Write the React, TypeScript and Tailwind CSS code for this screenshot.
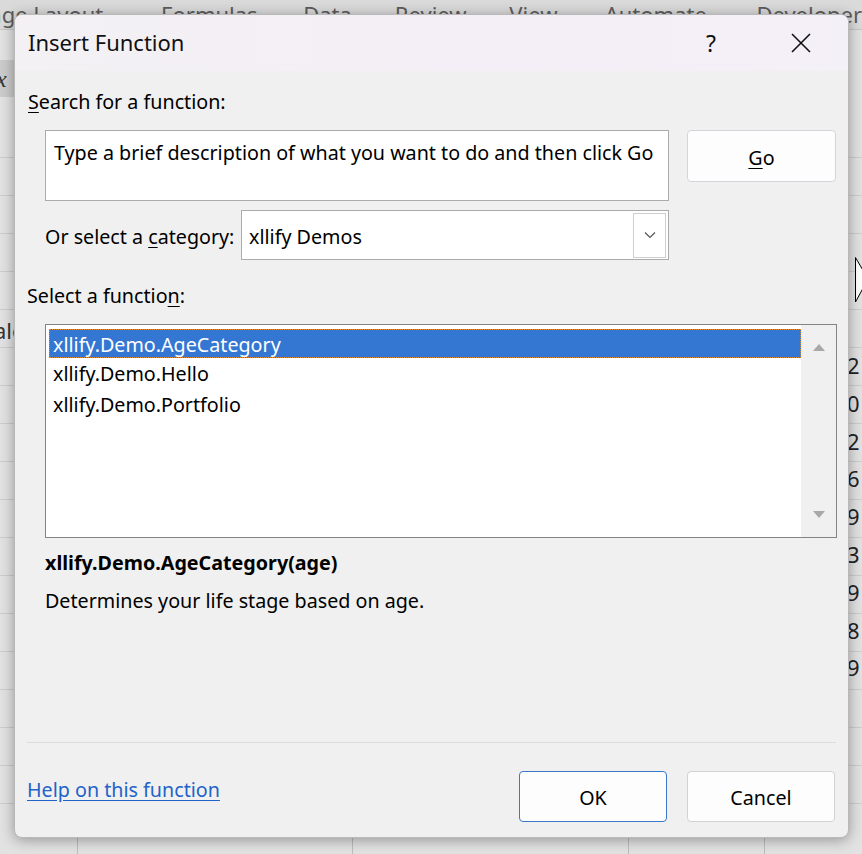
import { useState } from "react";

const font = { fontFamily: '"Noto Sans", "Open Sans", sans-serif' };

const gridRows = [157, 195, 233, 271, 309, 347, 385, 423, 461, 499, 537, 575, 613, 651, 689, 727, 765, 803];
const rightNums = ["2", "0", "2", "6", "9", "3", "9", "8", "9"];

function Backdrop() {
  return (
    <div className="absolute inset-0 bg-[#e2e2e2]">
      {/* ribbon tabs */}
      <div className="h-[30px] bg-[#dadada] border-b border-[#c6c6c6] flex items-start pt-[1px] text-[22px] leading-[26px] text-[#5c5c5c] whitespace-nowrap">
        <span className="ml-[-24px] w-[194px]">Page Layout</span>
        <span className="w-[149px]">Formulas</span>
        <span className="w-[96px]">Data</span>
        <span className="w-[120px]">Review</span>
        <span className="w-[100px]">View</span>
        <span className="w-[159px]">Automate</span>
        <span>Developer</span>
      </div>
      {/* formula bar */}
      <div className="mt-[30px] h-[37px] w-[14px] bg-[#cbcbcb] flex items-center text-[24px] italic text-[#333]" style={{ fontFamily: '"Liberation Serif", serif' }}>
        <span className="ml-[-4px]">x</span>
      </div>
      {gridRows.map((y) => (
        <div key={y} className="absolute left-0 right-0 h-px bg-[#cdcdcd]" style={{ top: y }} />
      ))}
      <div className="absolute left-[77px] top-[838px] bottom-0 w-px bg-[#bdbdbd]" />
      <div className="absolute left-[352px] top-[838px] bottom-0 w-px bg-[#bdbdbd]" />
      <div className="absolute left-[628px] top-[838px] bottom-0 w-px bg-[#bdbdbd]" />
      <div className="absolute left-[764px] top-[838px] bottom-0 w-px bg-[#bdbdbd]" />
      <span className="absolute left-[-6px] top-[314px] text-[22px] text-[#333]">ale</span>
      {rightNums.map((n, i) => (
        <span key={i} className="absolute left-[847px] text-[22px] leading-[26px] text-[#222]" style={{ top: 352 + i * 37.8 }}>
          {n}
        </span>
      ))}
      {/* mouse pointer */}
      <svg className="absolute left-[855px] top-[257px]" width="14" height="46" viewBox="0 0 14 46">
        <path d="M0.5 0.5 L13 22 L0.5 45 Z" fill="#fff" stroke="#000" strokeWidth="1" />
      </svg>
    </div>
  );
}

function ListRow({ label, selected }: { label: string; selected?: boolean }) {
  return (
    <div
      className={
        selected
          ? "h-[29px] flex items-center pl-[3px] pt-[2px] bg-[#3477d2] text-white border border-dotted border-[#e0892e]"
          : "h-[30.5px] flex items-center pl-[4px] pt-[2px] text-black"
      }
    >
      {label}
    </div>
  );
}

export default function App() {
  const [selected] = useState("xllify.Demo.AgeCategory");
  const funcs = ["xllify.Demo.AgeCategory", "xllify.Demo.Hello", "xllify.Demo.Portfolio"];

  return (
    <div className="relative w-[862px] h-[854px] overflow-hidden" style={font}>
      <Backdrop />

      {/* dialog */}
      <div className="absolute left-[14px] top-[14px] w-[835px] h-[824px] rounded-[8px] bg-[#f0f0f0] shadow-[0_2px_14px_rgba(0,0,0,0.35)] border border-[#b9b9b9] overflow-hidden flex flex-col text-[19.7px] text-black">
        {/* title bar */}
        <div className="h-[56px] flex items-center bg-gradient-to-r from-[#f3f1f4] via-[#f4eff6] to-[#f4f0f7]">
          <span className="ml-[13px] text-[22px] text-[#111] -mt-[2px]">Insert Function</span>
          <div className="ml-auto flex items-center mr-[24px]">
            <span className="w-[46px] text-center text-[23px] text-[#111]">?</span>
            <span className="w-[44px]" />
            <span className="w-[46px] flex justify-center">
              <svg width="20" height="20" viewBox="0 0 20 20">
                <path d="M1 1 L19 19 M19 1 L1 19" stroke="#111" strokeWidth="1.6" />
              </svg>
            </span>
          </div>
        </div>

        {/* search label */}
        <div className="mt-[19px] ml-[13px] h-[24px] leading-[24px]">
          <span className="underline underline-offset-[3px]">S</span>earch for a function:
        </div>

        {/* search + category */}
        <div className="mt-[16px] flex ml-[30px]">
          <div className="w-[624px] flex flex-col">
            <div className="h-[71px] bg-white border border-[#ababab] px-[8px] pt-[10px] leading-[24px] whitespace-nowrap">
              Type a brief description of what you want to do and then click Go
            </div>
            <div className="mt-[9px] flex items-center justify-between">
              <span className="pt-[4px]">
                Or select a <span className="underline underline-offset-[3px]">c</span>ategory:
              </span>
              <div className="w-[428px] h-[50px] bg-white border border-[#ababab] flex items-center pl-[7px] pr-[2px]">
                <span className="flex-1 pt-[4px]">xllify Demos</span>
                <div className="w-[33px] h-[45px] border border-[#cfcfcf] flex items-center justify-center">
                  <svg width="12" height="8" viewBox="0 0 12 8">
                    <path d="M1 1.5 L6 6.5 L11 1.5" fill="none" stroke="#555" strokeWidth="1.2" />
                  </svg>
                </div>
              </div>
            </div>
          </div>
          <button className="ml-[18px] w-[149px] h-[52px] rounded-[4px] bg-[#fdfdfd] border border-[#d2d6dc] pt-[3px]">
            <span className="underline underline-offset-[3px]">G</span>o
          </button>
        </div>

        {/* select a function */}
        <div className="mt-[24px] ml-[12px] h-[24px] leading-[24px]">
          Select a functio<span className="underline underline-offset-[3px]">n</span>:
        </div>

        <div className="mt-[16px] ml-[30px] w-[792px] h-[214px] border border-[#848484] bg-white flex">
          <div className="flex-1 pl-[3px] pt-[4px] flex flex-col">
            {funcs.map((f) => (
              <ListRow key={f} label={f} selected={f === selected} />
            ))}
          </div>
          <div className="w-[35px] bg-[#f0f0f0] flex flex-col items-center justify-between py-[18px]">
            <svg width="12" height="8" viewBox="0 0 12 8">
              <path d="M0 8 L6 1 L12 8 Z" fill="#a8a8a8" />
            </svg>
            <svg width="12" height="8" viewBox="0 0 12 8">
              <path d="M0 0 L6 7 L12 0 Z" fill="#a8a8a8" />
            </svg>
          </div>
        </div>

        <div className="mt-[13px] ml-[30px] h-[24px] leading-[24px] font-bold">xllify.Demo.AgeCategory(age)</div>
        <div className="mt-[14px] ml-[30px] h-[24px] leading-[24px]">Determines your life stage based on age.</div>

        <div className="mt-[129px] ml-[12px] w-[809px] h-px bg-[#dcdcdc]" />

        <div className="mt-[28px] flex items-center ml-[12px] mr-[13px]">
          <a className="text-[#1f63c9] underline underline-offset-[3px] -mt-[14px]" href="#">
            Help on this function
          </a>
          <button className="ml-auto w-[148px] h-[51px] rounded-[4px] bg-[#fdfdfd] border border-[#3b78c7] pt-[2px]">OK</button>
          <button className="ml-[20px] w-[148px] h-[51px] rounded-[4px] bg-[#fdfdfd] border border-[#d2d2d2] pt-[2px]">Cancel</button>
        </div>
      </div>
    </div>
  );
}
